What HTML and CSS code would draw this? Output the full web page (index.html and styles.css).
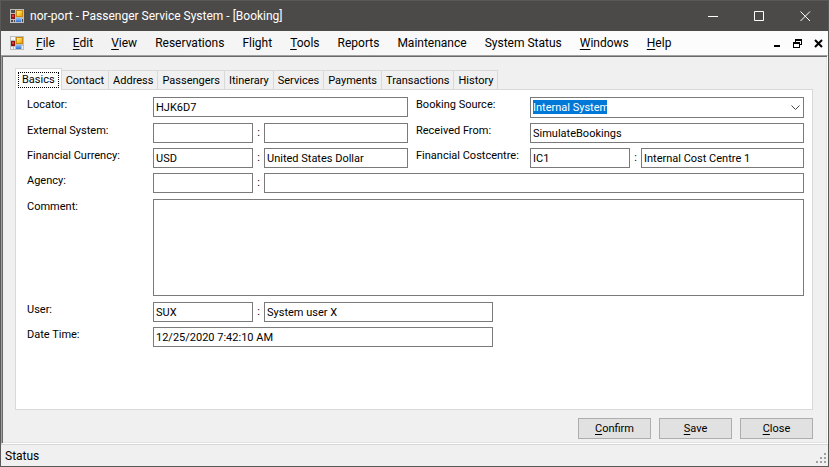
FILE: index.html
```html
<!DOCTYPE html>
<html lang="en">
<head>
<meta charset="utf-8">
<title>nor-port - Passenger Service System - [Booking]</title>
<link rel="stylesheet" href="styles.css">
</head>
<body>
<svg width="0" height="0" class="defs" aria-hidden="true">
  <defs>
    <linearGradient id="gold" x1="0" y1="0" x2="1" y2="1"><stop offset="0" stop-color="#fff0a0"/><stop offset=".5" stop-color="#fccb3c"/><stop offset="1" stop-color="#e8a010"/></linearGradient>
    <linearGradient id="blue" x1="0" y1="0" x2="0" y2="1"><stop offset="0" stop-color="#8fc0fa"/><stop offset="1" stop-color="#2f6fd0"/></linearGradient>
    <symbol id="app" viewBox="0 0 14 14">
      <path fill="#bdbdbd" d="M0 0h14v14H0z"/>
      <path fill="#4c4a48" d="M1 1h4v3H1z"/>
      <path fill="#4c4a48" d="M1 11h2v2H1zM4 11h1v2H4zM12 10h1v3h-1z"/>
      <path fill="#8e1410" d="M1 5h4v5H1z"/><path fill="#e0403a" d="M2 6h2v2H2z"/>
      <path fill="#c88a10" d="M6 1h7v7H6z"/><path fill="url(#gold)" d="M7 2h5v5H7z"/>
      <path fill="url(#blue)" d="M6 9h5v4H6z"/>
    </symbol>
    <symbol id="app-light" viewBox="0 0 14 14">
      <path fill="#bdbdbd" d="M0 0h14v14H0z"/>
      <path fill="#f4f4f4" d="M1 1h4v3H1zM1 11h2v2H1zM4 11h1v2H4zM12 10h1v3h-1z"/>
      <path fill="#8e1410" d="M1 5h4v5H1z"/><path fill="#e0403a" d="M2 6h2v2H2z"/>
      <path fill="#c88a10" d="M6 1h7v7H6z"/><path fill="url(#gold)" d="M7 2h5v5H7z"/>
      <path fill="url(#blue)" d="M6 9h5v4H6z"/>
    </symbol>
  </defs>
</svg>
<div class="window">
  <header class="titlebar">
    <svg class="app-icon" aria-hidden="true"><use href="#app"/></svg>
    <h1>nor-port - Passenger Service System - [Booking]</h1>
    <div class="caption">
      <button type="button" aria-label="Minimize"><svg viewBox="0 0 11 11"><path d="M0 5.5h10"/></svg></button>
      <button type="button" aria-label="Maximize"><svg viewBox="0 0 11 11"><path d="M.5.5h9v9h-9z"/></svg></button>
      <button type="button" aria-label="Close window"><svg viewBox="0 0 11 11"><path d="M.5.5l9.500 9.500M10 .5L.5 10"/></svg></button>
    </div>
  </header>
  <nav class="menubar">
    <svg class="app-icon" aria-hidden="true"><use href="#app-light"/></svg>
    <div class="menus">
      <button type="button"><u>F</u>ile</button>
      <button type="button"><u>E</u>dit</button>
      <button type="button"><u>V</u>iew</button>
      <button type="button">Reservations</button>
      <button type="button">Flight</button>
      <button type="button"><u>T</u>ools</button>
      <button type="button">Reports</button>
      <button type="button">Maintenance</button>
      <button type="button">System Status</button>
      <button type="button"><u>W</u>indows</button>
      <button type="button"><u>H</u>elp</button>
    </div>
    <div class="child-controls">
      <button type="button" aria-label="Minimize child"><svg viewBox="0 0 9 9"><path fill="#000" d="M2 6h6v2H2z"/></svg></button>
      <button type="button" aria-label="Restore child"><svg viewBox="0 0 9 9"><path fill="#000" fill-rule="evenodd" d="M2 0h7v6H7V5h1V2H3v1H2zM0 3h7v6H0zM1 5v3h5V5z"/></svg></button>
      <button type="button" aria-label="Close child"><svg viewBox="0 0 9 9"><path stroke="#000" stroke-width="2" d="M1 1l7 7M8 1L1 8"/></svg></button>
    </div>
  </nav>
  <main class="client">
    <div class="tabs" role="tablist">
      <button type="button" role="tab" aria-selected="true" class="tab selected"><span>Basics</span></button>
      <button type="button" role="tab" class="tab">Contact</button>
      <button type="button" role="tab" class="tab">Address</button>
      <button type="button" role="tab" class="tab">Passengers</button>
      <button type="button" role="tab" class="tab">Itinerary</button>
      <button type="button" role="tab" class="tab">Services</button>
      <button type="button" role="tab" class="tab">Payments</button>
      <button type="button" role="tab" class="tab">Transactions</button>
      <button type="button" role="tab" class="tab">History</button>
    </div>
    <form class="panel" id="booking">
      <label for="locator">Locator:</label>
      <input id="locator" type="text" value="HJK6D7">
      <label class="second" for="source">Booking Source:</label>
      <div class="combo">
        <select id="source"><option>Internal System</option></select>
        <svg viewBox="0 0 9 5" aria-hidden="true"><path d="M.5.5l4 4 4-4"/></svg>
      </div>

      <label for="ext">External System:</label>
      <div class="pair"><input id="ext" type="text"><span>:</span><input type="text" aria-label="External system name"></div>
      <label class="second" for="from">Received From:</label>
      <input id="from" type="text" value="SimulateBookings">

      <label for="cur">Financial Currency:</label>
      <div class="pair"><input id="cur" type="text" value="USD"><span>:</span><input type="text" aria-label="Currency name" value="United States Dollar"></div>
      <label class="second" for="cost">Financial Costcentre:</label>
      <div class="pair"><input id="cost" type="text" value="IC1"><span>:</span><input type="text" aria-label="Cost centre name" value="Internal Cost Centre 1"></div>

      <label for="agency">Agency:</label>
      <div class="pair wide"><input id="agency" type="text"><span>:</span><input type="text" aria-label="Agency name"></div>

      <label for="comment">Comment:</label>
      <textarea id="comment" class="wide"></textarea>

      <label for="user">User:</label>
      <div class="pair wide medium"><input id="user" type="text" value="SUX"><span>:</span><input type="text" aria-label="User name" value="System user X"></div>

      <label for="date">Date Time:</label>
      <input id="date" class="wide medium" type="text" value="12/25/2020 7:42:10 AM">
    </form>
    <div class="actions">
      <button type="submit" form="booking"><u>C</u>onfirm</button>
      <button type="button"><u>S</u>ave</button>
      <button type="button"><u>C</u>lose</button>
    </div>
  </main>
  <footer class="statusbar">
    <span>Status</span>
    <svg class="grip" viewBox="0 0 11 11" aria-hidden="true"><path fill="#a0a0a0" d="M8 0h2v2H8zM4 4h2v2H4zM8 4h2v2H8zM0 8h2v2H0zM4 8h2v2H4zM8 8h2v2H8z"/></svg>
  </footer>
</div>
</body>
</html>
```
FILE: styles.css
```css
* { box-sizing: border-box; }

body {
  margin: 0;
  color: #000;
  font: 11px/16px Roboto, "Liberation Sans", sans-serif;
}

button, input, select, textarea {
  margin: 0;
  padding: 0;
  border: 0;
  border-radius: 0;
  color: inherit;
  font: inherit;
  background: none;
}

u { text-underline-offset: 2px; }

.defs { position: absolute; }

.window {
  display: flex;
  flex-direction: column;
  min-height: 100vh;
  border: 1px solid #5a5957;
  background: #f0f0f0;
}

.titlebar {
  display: flex;
  align-items: center;
  height: 30px;
  padding-left: 9px;
  color: #fff;
  background: #4c4a48;
}

.app-icon { width: 14px; height: 14px; }

.titlebar h1 {
  flex: 1;
  margin: 0 0 0 6px;
  font-size: 12px;
  font-weight: 400;
}

.caption { display: flex; }

.caption button {
  display: grid;
  place-items: center;
  width: 46px;
  height: 30px;
}

.caption svg {
  width: 11px;
  height: 11px;
  fill: none;
  stroke: #fff;
}

.menubar {
  display: flex;
  align-items: center;
  height: 24px;
  padding: 0 5px 0 9px;
  font-size: 12px;
  background: linear-gradient(90deg, #f0f0f0, #fcfcfc 70%);
}

.menus {
  display: flex;
  flex: 1;
  gap: 18px;
  margin-left: 12px;
}

.child-controls { display: flex; gap: 12px; }

.child-controls button, .child-controls svg {
  display: block;
  width: 9px;
  height: 9px;
}

.client {
  display: flex;
  flex: 1;
  flex-direction: column;
  padding: 12px 14px 4px 13px;
  border: 1px solid;
  border-color: #a0a0a0 #fff #fff #a0a0a0;
  box-shadow: inset 1px 1px #696969, inset -1px -1px #e3e3e3;
}

.tabs {
  display: flex;
  align-items: flex-end;
}

.tab {
  height: 19px;
  padding: 2px 4px 0;
  border: 1px solid #d9d9d9;
  border-width: 1px 1px 0 0;
}

.tab.selected {
  z-index: 1;
  height: 22px;
  margin: 0 0 -1px;
  padding: 2px;
  border-left-width: 1px;
  background: #fff;
}

.tab.selected span {
  display: block;
  padding: 0 3px;
  border: 1px dotted #000;
  line-height: 14px;
}

.panel {
  display: grid;
  flex: 1;
  grid-template-rows: 21px 20px 20px 21px 98px 20px 20px;
  grid-template-columns: 126px 255px 122px 1fr;
  row-gap: 5px;
  align-items: start;
  padding: 7px 8px 7px 11px;
  border: 1px solid #d9d9d9;
  background: #fff;
}

.panel .second { padding-left: 8px; }

.panel input, .panel textarea, .panel select {
  width: 100%;
  min-width: 0;
  height: 20px;
  padding: 0 2px;
  border: 1px solid #7a7a7a;
  background: #fff;
}

.panel textarea { height: 97px; resize: none; }

.pair {
  display: grid;
  grid-template-columns: 100px 11px 1fr;
  text-align: center;
}

.pair span { line-height: 20px; }

.wide { grid-column: 2 / -1; }

.panel .medium { width: 340px; max-width: 100%; }

.combo { position: relative; }

.panel .combo select {
  height: 21px;
  color: #fff;
  background: #fff linear-gradient(#0078d7, #0078d7) 2px 2px / 74px 14px no-repeat;
  appearance: none;
}

.combo option { color: #000; }

.combo svg {
  position: absolute;
  top: 8px;
  right: 4px;
  width: 9px;
  height: 5px;
  fill: none;
  stroke: #444;
  pointer-events: none;
}

.actions {
  display: flex;
  gap: 8px;
  justify-content: flex-end;
  padding-top: 8px;
}

.actions button {
  width: 73px;
  height: 21px;
  border: 1px solid #adadad;
  background: #e1e1e1;
}

.statusbar {
  display: flex;
  align-items: center;
  justify-content: space-between;
  height: 22px;
  padding: 0 1px 0 4px;
  border-top: 1px solid #d7d7d7;
  font-size: 12px;
}

.grip {
  align-self: flex-end;
  width: 11px;
  height: 11px;
  margin-bottom: 2px;
}
```
